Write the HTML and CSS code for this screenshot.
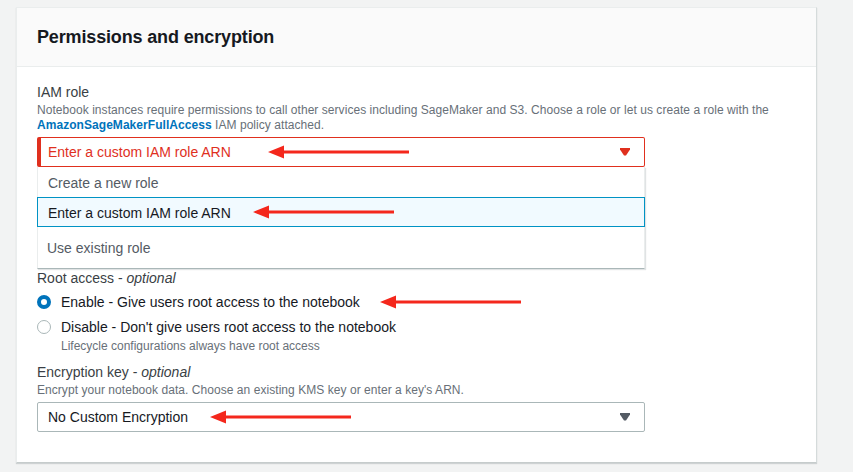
FILE: index.html
```html
<!DOCTYPE html>
<html lang="en">
<head>
<meta charset="utf-8">
<title>Permissions and encryption</title>
<link rel="stylesheet" href="styles.css">
</head>
<body>
<div class="page">
  <section class="card">
    <header class="card-header">
      <h2 class="card-title">Permissions and encryption</h2>
    </header>
    <div class="card-body">
      <div class="field">
        <div class="label">IAM role</div>
        <div class="desc">Notebook instances require permissions to call other services including SageMaker and S3. Choose a role or let us create a role with the <a class="link" href="#">AmazonSageMakerFullAccess</a> IAM policy attached.</div>
        <div class="select select-error">
          <span class="select-text">Enter a custom IAM role ARN</span>
          <svg class="caret" width="10" height="8" viewBox="0 0 10 8"><path d="M0 0H10V1.5L6 7.5H4L0 1.5Z" fill="#e0301e"/></svg>
          <svg class="arrow arrow-1" width="142" height="14" viewBox="0 0 142 14"><path d="M0 7L16 0.5V5.5H141V8.5H16V13.5Z" fill="#f4271c"/></svg>
        </div>
        <ul class="menu">
          <li class="option">Create a new role</li>
          <li class="option option-active">Enter a custom IAM role ARN
            <svg class="arrow arrow-2" width="142" height="14" viewBox="0 0 142 14"><path d="M0 7L16 0.5V5.5H141V8.5H16V13.5Z" fill="#f4271c"/></svg>
          </li>
          <li class="option option-last">Use existing role</li>
        </ul>
      </div>

      <div class="field">
        <div class="label label-tight">Root access - <em>optional</em></div>
        <div class="radio-group">
          <div class="radio-row">
            <span class="radio radio-on"></span>
            <span class="radio-text">Enable - Give users root access to the notebook</span>
            <svg class="arrow arrow-3" width="142" height="14" viewBox="0 0 142 14"><path d="M0 7L16 0.5V5.5H141V8.5H16V13.5Z" fill="#f4271c"/></svg>
          </div>
          <div class="radio-row">
            <span class="radio"></span>
            <span class="radio-text">Disable - Don't give users root access to the notebook</span>
          </div>
          <div class="radio-desc">Lifecycle configurations always have root access</div>
        </div>
      </div>

      <div class="field field-enc">
        <div class="label label-tight">Encryption key - <em>optional</em></div>
        <div class="desc desc-enc">Encrypt your notebook data. Choose an existing KMS key or enter a key's ARN.</div>
        <div class="select">
          <span class="select-text select-text-plain">No Custom Encryption</span>
          <svg class="caret" width="10" height="8" viewBox="0 0 10 8"><path d="M0 0H10V1.5L6 7.5H4L0 1.5Z" fill="#545b64"/></svg>
          <svg class="arrow arrow-4" width="142" height="14" viewBox="0 0 142 14"><path d="M0 7L16 0.5V5.5H141V8.5H16V13.5Z" fill="#f4271c"/></svg>
        </div>
      </div>
    </div>
  </section>
</div>
</body>
</html>
```

FILE: styles.css
```css
* { box-sizing: border-box; }
html, body { margin: 0; padding: 0; }
body {
  background: #f2f3f3;
  font-family: "Liberation Sans", Arial, sans-serif;
  color: #16191f;
  width: 853px;
  height: 472px;
  overflow: hidden;
}
.page {
  padding: 7px 0 0 16px;
}
.card {
  width: 801px;
  background: #fff;
  border: 1px solid #eaeded;
  border-right-color: #d5dbdb;
  border-bottom-color: #c6cccc;
  box-shadow: 0 1px 1px rgba(0, 28, 36, 0.15);
}
.card-header {
  height: 59px;
  background: #fafafa;
  border-bottom: 1px solid #eaeded;
  padding: 0 20px;
  display: flex;
  align-items: center;
}
.card-title {
  margin: 0;
  font-size: 18px;
  font-weight: 700;
  color: #16191f;
  line-height: 22px;
  letter-spacing: -0.15px;
}
.card-body {
  padding: 14px 20px 30px 20px;
}
.label {
  font-size: 14px;
  line-height: 22px;
  color: #3a3f45;
}
.label em { font-style: italic; }
.label-tight { line-height: 18px; }
.desc {
  font-size: 12px;
  line-height: 15px;
  color: #687078;
  max-width: 745px;
  letter-spacing: 0.05px;
}
.link {
  color: #0073bb;
  font-weight: 700;
  text-decoration: none;
}
.select {
  position: relative;
  width: 608px;
  height: 30px;
  margin-top: 4px;
  border: 1px solid #aab7b8;
  border-radius: 2px;
  display: flex;
  align-items: center;
  justify-content: space-between;
  padding: 0 14px 0 10px;
  background: #fff;
}
.select-error {
  border-color: #e0301e;
  border-left-width: 4px;
  padding-left: 7px;
}
.select-text {
  font-size: 14px;
  color: #e0301e;
}
.select-text-plain { color: #16191f; }
.caret { display: block; }
.menu {
  width: 608px;
  list-style: none;
  margin: 0;
  padding: 0;
  border: 1px solid #eaeded;
  border-top: none;
  border-bottom: 1px solid #aab7b8;
  box-shadow: 1px 1px 1px rgba(0, 28, 36, 0.12);
  background: #fff;
}
.option {
  position: relative;
  height: 30px;
  display: flex;
  align-items: center;
  padding-left: 10px;
  padding-top: 1px;
  font-size: 14px;
  color: #545b64;
  border: 1px solid transparent;
  margin: 0 -1px;
}
.option-active {
  background: #f1faff;
  border-color: #0093c4;
  color: #16191f;
}
.option-last {
  height: 41px;
  padding-top: 1px;
  padding-left: 9px;
}
.radio-group {
  margin-top: 4px;
  display: flex;
  flex-direction: column;
  gap: 3px;
}
.radio-row {
  position: relative;
  display: flex;
  align-items: center;
  height: 22px;
  gap: 10px;
}
.radio {
  width: 14px;
  height: 14px;
  border-radius: 50%;
  border: 1px solid #aab7b8;
  background: #fff;
  flex: none;
}
.radio-on {
  border: 4.5px solid #0073bb;
}
.radio-text {
  font-size: 14px;
  color: #16191f;
}
.radio-desc {
  font-size: 12px;
  line-height: 15px;
  color: #687078;
  padding-left: 24px;
  margin-top: -2px;
}
.field-enc { margin-top: 9px; }
.desc-enc { margin-top: 2px; }
.arrow {
  position: absolute;
  display: block;
  top: 50%;
  margin-top: -7px;
}
.arrow-1 { left: 227px; }
.arrow-2 { left: 215px; }
.arrow-3 { left: 343px; }
.arrow-4 { left: 172px; }
```
